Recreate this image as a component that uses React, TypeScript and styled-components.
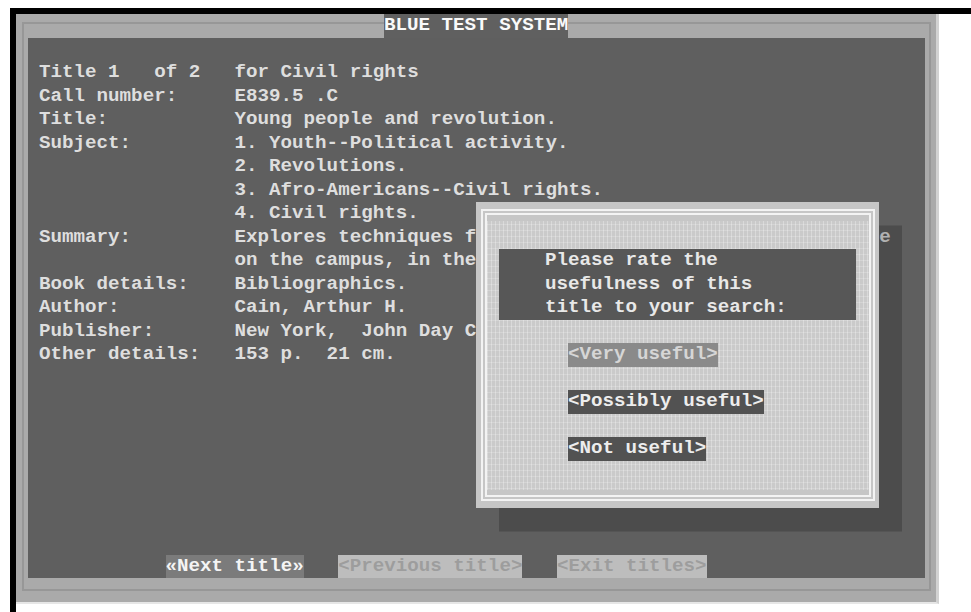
import * as React from "react";
import styled, { createGlobalStyle } from "styled-components";

// text-mode cell size: 80 x 25 cells
const CH = 11.5;
const ROW = 23.5;

const GlobalStyle = createGlobalStyle`
  html, body {
    margin: 0;
    background: #fff;
  }
  body {
    font-family: "Liberation Mono", "DejaVu Sans Mono", monospace;
  }
`;

const Monitor = styled.div`
  box-sizing: border-box;
  min-height: calc(100vh - 8px);
  margin: 8px 0 0 10px;
  border-top: 6px solid #000;
  border-left: 6px solid #000;
  background: #fff;
`;

const Screen = styled.div`
  display: grid;
  grid-template-columns: repeat(80, ${CH}px);
  grid-template-rows: repeat(25, ${ROW}px);
  width: max-content;
  background: #aaaaaa;
  border-right: 3px solid #d2d2d2;
  border-bottom: 2px solid #e6e6e6;
  font: bold 19.2px / ${ROW}px "Liberation Mono", "DejaVu Sans Mono", monospace;
  color: #dedede;
  white-space: pre;
`;

const FrameRule = styled.div`
  grid-area: 1 / 1 / -1 / -1;
  margin: 8px 5px 11px 6px;
  border: 2px solid #979797;
`;

const Caption = styled.div`
  grid-area: 1 / 33 / 2 / 49;
  z-index: 1;
  background: #606060;
  color: #fafafa;
`;

const Panel = styled.div`
  grid-area: 2 / 2 / 25 / 80;
  display: flex;
  flex-direction: column;
  padding: ${ROW}px 0 0 ${CH}px;
  background: #5f5f5f;
`;

const Record = styled.div`
  display: grid;
  grid-template-columns: ${17 * CH}px auto;
  align-content: start;
`;

const Label = styled.div``;

const Value = styled.div`
  display: flex;
  flex-direction: column;
`;

const Toolbar = styled.div`
  display: flex;
  gap: ${3 * CH}px;
  margin-top: auto;
  padding-left: ${11 * CH}px;
`;

const NavButton = styled.span<{ $active?: boolean }>`
  height: ${ROW}px;
  background: ${(p) => (p.$active ? "#7b7b7b" : "#bdbdbd")};
  color: ${(p) => (p.$active ? "#f4f4f4" : "#9d9d9d")};
`;

const Dialog = styled.div`
  grid-area: 9 / 41 / 22 / 76;
  z-index: 2;
  display: grid;
  grid-template-columns: repeat(35, ${CH}px);
  grid-template-rows: repeat(13, ${ROW}px);
  background: #c6c6c6;
  box-shadow: ${2 * CH}px ${ROW}px 0 rgba(0, 0, 0, 0.2);
`;

const DoubleRule = styled.div`
  grid-area: 1 / 1 / -1 / -1;
  margin: 7px 4px 7px 5px;
  padding: 6px 0 5px;
  border: 6px double #f3f3f3;
  background-clip: content-box;
  background-color: #cacaca;
  background-image:
    repeating-linear-gradient(90deg, rgba(255, 255, 255, 0.28) 0 1px, transparent 1px 4px),
    repeating-linear-gradient(0deg, rgba(255, 255, 255, 0.2) 0 1px, transparent 1px 6px);
`;

const Question = styled.div`
  grid-area: 3 / 3 / 6 / 34;
  z-index: 1;
  display: flex;
  flex-direction: column;
  padding-left: ${4 * CH}px;
  background: #575757;
  color: #e8e8e8;
`;

const Choices = styled.div`
  grid-area: 7 / 9 / 12 / -1;
  z-index: 1;
  display: flex;
  flex-direction: column;
  align-items: flex-start;
  gap: ${ROW}px;
`;

const Choice = styled.span<{ $soft?: boolean }>`
  height: ${ROW}px;
  background: ${(p) => (p.$soft ? "#8a8a8a" : "#525252")};
  color: ${(p) => (p.$soft ? "#d6d6d6" : "#ededed")};
`;

// lines running under the rating box are cut where the box starts
const fields: [string, string[]][] = [
  ["Title 1   of 2", ["for Civil rights"]],
  ["Call number:", ["E839.5 .C"]],
  ["Title:", ["Young people and revolution."]],
  [
    "Subject:",
    [
      "1. Youth--Political activity.",
      "2. Revolutions.",
      "3. Afro-Americans--Civil rights.",
      "4. Civil rights.",
    ],
  ],
  [
    "Summary:",
    [
      "Explores techniques for political actions by young people",
      "on the campus, in the",
    ],
  ],
  ["Book details:", ["Bibliographics."]],
  ["Author:", ["Cain, Arthur H."]],
  ["Publisher:", ["New York,  John Day Co., 1970."]],
  ["Other details:", ["153 p.  21 cm."]],
];

export default function App() {
  return (
    <>
      <GlobalStyle />
      <Monitor>
        <Screen>
          <FrameRule />
          <Caption>BLUE TEST SYSTEM</Caption>

          <Panel>
            <Record>
              {fields.map(([label, lines]) => (
                <React.Fragment key={label}>
                  <Label>{label}</Label>
                  <Value>
                    {lines.map((line) => (
                      <span key={line}>{line}</span>
                    ))}
                  </Value>
                </React.Fragment>
              ))}
            </Record>

            <Toolbar>
              <NavButton $active>«Next title»</NavButton>
              <NavButton>{"<Previous title>"}</NavButton>
              <NavButton>{"<Exit titles>"}</NavButton>
            </Toolbar>
          </Panel>

          <Dialog>
            <DoubleRule />
            <Question>
              <span>Please rate the</span>
              <span>usefulness of this</span>
              <span>title to your search:</span>
            </Question>
            <Choices>
              <Choice $soft>{"<Very useful>"}</Choice>
              <Choice>{"<Possibly useful>"}</Choice>
              <Choice>{"<Not useful>"}</Choice>
            </Choices>
          </Dialog>
        </Screen>
      </Monitor>
    </>
  );
}
